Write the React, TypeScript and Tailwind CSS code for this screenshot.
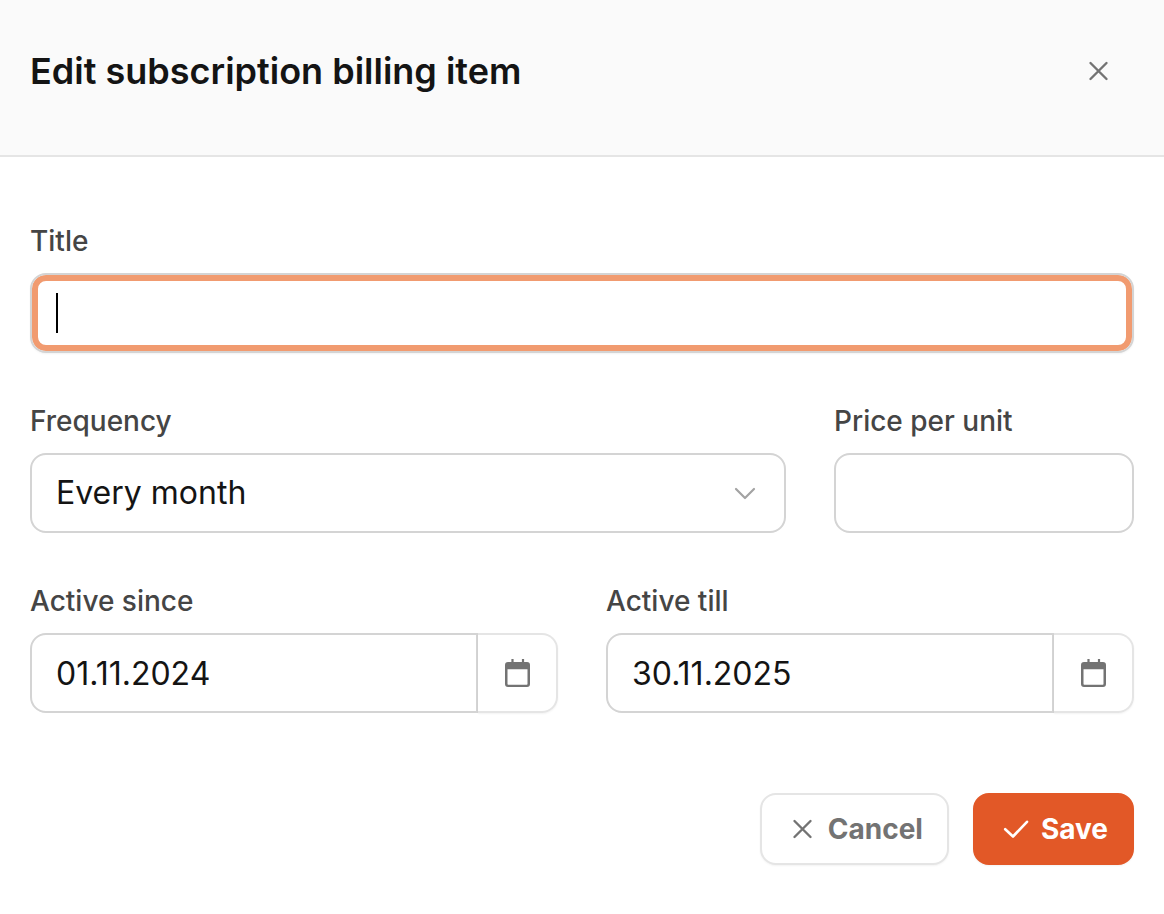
import { useState } from 'react'
import type { ReactNode } from 'react'

interface FieldProps {
  id: string
  label: string
  className?: string
  children: ReactNode
}

const inputClass =
  'block h-20 w-full min-w-0 rounded-2xl border-2 border-[#d4d4d4] bg-white px-6 text-[32px] text-[#141414] outline-none'

function Field({ id, label, className = '', children }: FieldProps) {
  return (
    <div className={`flex flex-col gap-3 ${className}`}>
      <label htmlFor={id} className="text-[28px] leading-10 font-medium text-[#454545]">
        {label}
      </label>
      {children}
    </div>
  )
}

function CloseIcon() {
  return (
    <svg viewBox="0 0 34 34" className="size-[34px]" fill="none" stroke="currentColor" strokeWidth="2.4" strokeLinecap="round" aria-hidden="true">
      <path d="M8.500 9l16 16M24.500 9l-16 16" />
    </svg>
  )
}

function CheckIcon() {
  return (
    <svg viewBox="0 0 34 34" className="size-[34px]" fill="none" stroke="currentColor" strokeWidth="2.6" strokeLinecap="round" strokeLinejoin="round" aria-hidden="true">
      <path d="M6.200 17.200l7.800 7.300L28 9.800" />
    </svg>
  )
}

function CalendarIcon() {
  return (
    <svg viewBox="0 0 28 32" className="h-8 w-7" fill="none" aria-hidden="true">
      <path d="M9.500 2v5M20 2v5" stroke="currentColor" strokeWidth="2.200" />
      <path fillRule="evenodd" clipRule="evenodd" d="M5 5h19a3 3 0 0 1 3 3v19a3 3 0 0 1-3 3H5a3 3 0 0 1-3-3V8a3 3 0 0 1 3-3zM4.500 12.200V27a.7.7 0 0 0 .7.7h18.600a.7.7 0 0 0 .7-.7V12.200z" fill="currentColor" />
    </svg>
  )
}

function DateField({ id, label, initial }: { id: string; label: string; initial: string }) {
  const [value, setValue] = useState(initial)

  return (
    <Field id={id} label={label} className="min-w-0 flex-1">
      <div className="flex">
        <input id={id} type="text" value={value} onChange={e => setValue(e.target.value)} className={`${inputClass} flex-1 rounded-r-none`} />
        <button type="button" aria-label={`${label}: pick a date`} className="flex h-20 w-20 shrink-0 items-center justify-center rounded-r-2xl border-2 border-l-0 border-[#e5e5e5] text-[#737373] shadow-xs">
          <CalendarIcon />
        </button>
      </div>
    </Field>
  )
}

export default function App() {
  const [title, setTitle] = useState('')
  const [focused, setFocused] = useState(true)
  const [price, setPrice] = useState('')

  return (
    <div className="min-h-screen bg-white font-['Inter',sans-serif]">
      <header className="flex items-start justify-between border-b-2 border-[#e5e5e5] bg-[#fafafa] px-[30px] pt-[47px] pb-[60px]">
        <h1 className="text-[36px] leading-12 font-semibold text-[#141414]">Edit subscription billing item</h1>
        <button type="button" aria-label="Close" className="flex h-12 w-[70px] items-center justify-center text-[#737373]">
          <CloseIcon />
        </button>
      </header>

      <form className="flex flex-col gap-12 px-[30px] pt-16 pb-12" onSubmit={e => e.preventDefault()}>
        <Field id="title" label="Title">
          <div className="relative">
            <input
              id="title"
              type="text"
              autoFocus
              value={title}
              onChange={e => setTitle(e.target.value)}
              onFocus={() => setFocused(true)}
              onBlur={() => setFocused(false)}
              className={`${inputClass} shadow-xs ${title ? '' : 'caret-transparent'} ${focused ? 'inset-ring-6 inset-ring-[#f19b70]' : ''}`}
            />
            {focused && !title && <span className="pointer-events-none absolute top-5 left-[26px] h-10 w-[2px] bg-black" />}
          </div>
        </Field>

        <div className="flex gap-12">
          <Field id="frequency" label="Frequency" className="min-w-0 flex-1">
            <div className="relative">
              <select id="frequency" className={`${inputClass} appearance-none`}>
                <option>Every month</option>
                <option>Every quarter</option>
                <option>Every year</option>
              </select>
              <svg viewBox="0 0 24 24" className="pointer-events-none absolute top-7 right-7 size-6" fill="none" stroke="#a3a3a3" strokeWidth="2.2" strokeLinecap="round" strokeLinejoin="round" aria-hidden="true">
                <path d="M2 8l9 9 9-9" />
              </svg>
            </div>
          </Field>
          <Field id="price" label="Price per unit" className="w-[300px]">
            <input id="price" type="text" inputMode="decimal" value={price} onChange={e => setPrice(e.target.value)} className={inputClass} />
          </Field>
        </div>

        <div className="flex gap-12">
          <DateField id="active-since" label="Active since" initial="01.11.2024" />
          <DateField id="active-till" label="Active till" initial="30.11.2025" />
        </div>

        <div className="mt-8 flex justify-end gap-6 text-[28px] font-bold">
          <button type="button" className="flex h-18 items-center gap-2 rounded-2xl border-2 border-[#e5e5e5] bg-white px-6 text-[#737373] shadow-xs">
            <CloseIcon />
            Cancel
          </button>
          <button type="submit" className="flex h-18 items-center gap-2 rounded-2xl border-2 border-[#e25827] bg-[#e25827] px-6 text-white shadow-xs">
            <CheckIcon />
            Save
          </button>
        </div>
      </form>
    </div>
  )
}
